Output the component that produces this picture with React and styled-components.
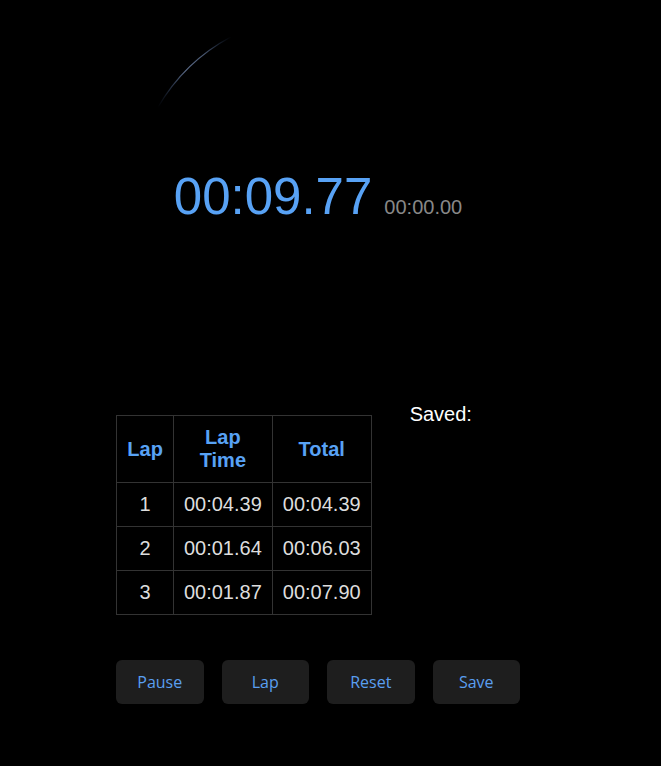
import React from 'react';
import styled, { createGlobalStyle } from 'styled-components';

const GlobalStyle = createGlobalStyle`
  html, body {
    margin: 0;
    background: #000;
  }
  body {
    font-family: "Liberation Sans", Arial, sans-serif;
    color: #fff;
  }
`;

const laps = [
  { n: 1, lap: '00:04.39', total: '00:04.39' },
  { n: 2, lap: '00:01.64', total: '00:06.03' },
  { n: 3, lap: '00:01.87', total: '00:07.90' },
];

const Ring = () => (
  <RingSvg width="372" height="372" viewBox="0 0 372 372">
    <defs>
      <linearGradient id="arcFade" gradientUnits="userSpaceOnUse" x1="25.8" y1="93.5" x2="99.2" y2="22.7">
        <stop offset="0" stopColor="#4a6fb0" stopOpacity="0" />
        <stop offset="0.45" stopColor="#9ab4e4" stopOpacity="0.6" />
        <stop offset="0.7" stopColor="#8eaadc" stopOpacity="0.5" />
        <stop offset="1" stopColor="#4a6fb0" stopOpacity="0" />
      </linearGradient>
    </defs>
    <path
      d="M 25.8 93.5 A 185 185 0 0 1 99.2 22.7"
      fill="none"
      stroke="url(#arcFade)"
      strokeWidth="1.2"
      strokeLinecap="round"
    />
  </RingSvg>
);

const App = () => {
  return (
    <>
      <GlobalStyle />
      <Page>
        <Dial>
          <Ring />
          <TimeRow>
            <MainTime>00:09.77</MainTime>
            <LapTime>00:00.00</LapTime>
          </TimeRow>
        </Dial>

        <Middle>
          <LapTable>
            <thead>
              <tr>
                <Th>Lap</Th>
                <Th>Lap<br />Time</Th>
                <Th>Total</Th>
              </tr>
            </thead>
            <tbody>
              {laps.map((l) => (
                <tr key={l.n}>
                  <Td>{l.n}</Td>
                  <Td>{l.lap}</Td>
                  <Td>{l.total}</Td>
                </tr>
              ))}
            </tbody>
          </LapTable>
          <Saved>Saved:</Saved>
        </Middle>

        <Controls>
          <Button>Pause</Button>
          <Button>Lap</Button>
          <Button>Reset</Button>
          <Button>Save</Button>
        </Controls>
      </Page>
    </>
  );
};

export default App;

const Page = styled.div`
  width: 636px;
  display: flex;
  flex-direction: column;
  align-items: center;
  padding-top: 14px;
`;

const Dial = styled.div`
  width: 372px;
  height: 372px;
  display: grid;
  place-items: center;

  & > * {
    grid-area: 1 / 1;
  }
`;

const RingSvg = styled.svg`
  display: block;
`;

const TimeRow = styled.div`
  display: flex;
  align-items: baseline;
  gap: 12px;
  margin-top: -8px;
`;

const MainTime = styled.span`
  font-size: 51px;
  color: #58a2f5;
`;

const LapTime = styled.span`
  font-size: 20px;
  color: #888;
`;

const Middle = styled.div`
  display: flex;
  align-items: flex-start;
  gap: 38px;
  margin-top: 17px;
`;

const LapTable = styled.table`
  border-collapse: collapse;
  margin-top: 12px;
  font-size: 20px;
`;

const Th = styled.th`
  border: 1px solid #333;
  padding: 10px;
  color: #58a2f5;
  font-weight: bold;
  line-height: 23px;
`;

const Td = styled.td`
  border: 1px solid #333;
  padding: 10px;
  color: #ddd;
  text-align: center;
  line-height: 23px;
`;

const Saved = styled.div`
  width: 110px;
  font-size: 20px;
  line-height: 23px;
  color: #fff;
`;

const Controls = styled.div`
  display: flex;
  gap: 18px;
  margin-top: 45px;
`;

const Button = styled.button`
  width: 87.5px;
  height: 44px;
  border: none;
  border-radius: 6px;
  background: #1e1e1e;
  color: #5a9ff0;
  font-family: "Open Sans", "Noto Sans", sans-serif;
  font-size: 16px;
  cursor: pointer;
`;
